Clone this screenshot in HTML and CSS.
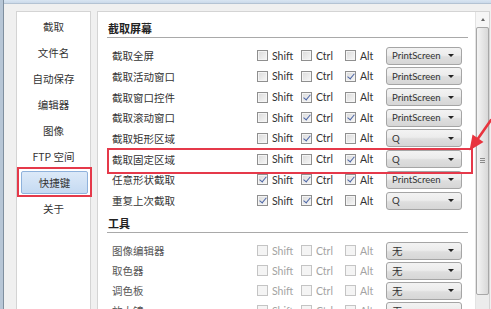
FILE: index.html
```html
<!DOCTYPE html>
<html lang="zh-CN">
<head>
<meta charset="utf-8">
<title>快捷键</title>
<link rel="stylesheet" href="styles.css">
</head>
<body>
<div class="window">
  <div class="topband"></div>
  <div class="main">
    <div class="frame-left"></div>
    <nav class="sidebar">
      <div class="nav-item">截取</div>
      <div class="nav-item">文件名</div>
      <div class="nav-item">自动保存</div>
      <div class="nav-item">编辑器</div>
      <div class="nav-item">图像</div>
      <div class="nav-item">FTP 空间</div>
      <div class="nav-item selected"><span class="sel">快捷键</span></div>
      <div class="nav-item">关于</div>
    </nav>
    <section class="content">
      <div class="pane">
        <div class="group">
          <div class="group-title">截取屏幕</div>
          <div class="rows main-rows">
            <div class="row">
              <span class="label">截取全屏</span>
              <span class="chk"><span class="box"></span>Shift</span>
              <span class="chk"><span class="box"></span>Ctrl</span>
              <span class="chk"><span class="box"></span>Alt</span>
              <span class="combo"><span class="val">PrintScreen</span><i class="caret"></i></span>
            </div>
            <div class="row">
              <span class="label">截取活动窗口</span>
              <span class="chk"><span class="box"></span>Shift</span>
              <span class="chk"><span class="box"></span>Ctrl</span>
              <span class="chk"><span class="box on"></span>Alt</span>
              <span class="combo"><span class="val">PrintScreen</span><i class="caret"></i></span>
            </div>
            <div class="row">
              <span class="label">截取窗口控件</span>
              <span class="chk"><span class="box"></span>Shift</span>
              <span class="chk"><span class="box on"></span>Ctrl</span>
              <span class="chk"><span class="box"></span>Alt</span>
              <span class="combo"><span class="val">PrintScreen</span><i class="caret"></i></span>
            </div>
            <div class="row">
              <span class="label">截取滚动窗口</span>
              <span class="chk"><span class="box"></span>Shift</span>
              <span class="chk"><span class="box on"></span>Ctrl</span>
              <span class="chk"><span class="box on"></span>Alt</span>
              <span class="combo"><span class="val">PrintScreen</span><i class="caret"></i></span>
            </div>
            <div class="row">
              <span class="label">截取矩形区域</span>
              <span class="chk"><span class="box"></span>Shift</span>
              <span class="chk"><span class="box on"></span>Ctrl</span>
              <span class="chk"><span class="box"></span>Alt</span>
              <span class="combo"><span class="val">Q</span><i class="caret"></i></span>
            </div>
            <div class="row marked">
              <span class="label">截取固定区域</span>
              <span class="chk"><span class="box"></span>Shift</span>
              <span class="chk"><span class="box"></span>Ctrl</span>
              <span class="chk"><span class="box on"></span>Alt</span>
              <span class="combo"><span class="val">Q</span><i class="caret"></i></span>
            </div>
            <div class="row">
              <span class="label">任意形状截取</span>
              <span class="chk"><span class="box on"></span>Shift</span>
              <span class="chk"><span class="box on"></span>Ctrl</span>
              <span class="chk"><span class="box on"></span>Alt</span>
              <span class="combo"><span class="val">PrintScreen</span><i class="caret"></i></span>
            </div>
            <div class="row">
              <span class="label">重复上次截取</span>
              <span class="chk"><span class="box on"></span>Shift</span>
              <span class="chk"><span class="box on"></span>Ctrl</span>
              <span class="chk"><span class="box"></span>Alt</span>
              <span class="combo"><span class="val">Q</span><i class="caret"></i></span>
            </div>
          </div>
        </div>
        <div class="group tools">
          <div class="group-title">工具</div>
          <div class="rows tool-rows">
            <div class="row disabled">
              <span class="label">图像编辑器</span>
              <span class="chk"><span class="box"></span>Shift</span>
              <span class="chk"><span class="box"></span>Ctrl</span>
              <span class="chk"><span class="box"></span>Alt</span>
              <span class="combo"><span class="val">无</span><i class="caret"></i></span>
            </div>
            <div class="row disabled">
              <span class="label">取色器</span>
              <span class="chk"><span class="box"></span>Shift</span>
              <span class="chk"><span class="box"></span>Ctrl</span>
              <span class="chk"><span class="box"></span>Alt</span>
              <span class="combo"><span class="val">无</span><i class="caret"></i></span>
            </div>
            <div class="row disabled">
              <span class="label">调色板</span>
              <span class="chk"><span class="box"></span>Shift</span>
              <span class="chk"><span class="box"></span>Ctrl</span>
              <span class="chk"><span class="box"></span>Alt</span>
              <span class="combo"><span class="val">无</span><i class="caret"></i></span>
            </div>
            <div class="row disabled">
              <span class="label">放大镜</span>
              <span class="chk"><span class="box"></span>Shift</span>
              <span class="chk"><span class="box"></span>Ctrl</span>
              <span class="chk"><span class="box"></span>Alt</span>
              <span class="combo"><span class="val">无</span><i class="caret"></i></span>
            </div>
          </div>
        </div>
      </div>
      <div class="scrollbar">
        <div class="sb-up"><i class="up-caret"></i></div>
        <div class="sb-thumb"><span class="grip"></span></div>
      </div>
    </section>
  </div>
  <svg class="arrow" width="32" height="36" viewBox="460 118 32 36">
    <line x1="491" y1="120" x2="477" y2="140" stroke="#e8343e" stroke-width="2.6" stroke-linecap="round"/>
    <polygon points="469.5,150.5 472.5,134.5 483.5,142" fill="#e8343e"/>
  </svg>
</div>
</body>
</html>
```
FILE: styles.css
```css
* { box-sizing: border-box; }
html, body {
  margin: 0;
  padding: 0;
  width: 491px;
  height: 309px;
  overflow: hidden;
  background: #f0f0f0;
}
body {
  font-family: "Noto Sans CJK SC", "Noto Sans", sans-serif;
  font-size: 10.5px;
  color: #333;
}
.window {
  position: relative;
  width: 491px;
  height: 309px;
  display: flex;
  flex-direction: column;
}
.topband {
  height: 4px;
  flex: none;
  background: linear-gradient(#d9e5f2, #cbdaea);
  border-bottom: 1px solid #b4c3d3;
}
.main {
  flex: 1;
  display: flex;
  padding-top: 7px;
  min-height: 0;
}
.frame-left {
  width: 4px;
  margin-top: -12px;
  flex: none;
  background: #b7c6d6;
  border-right: 1px solid #7f8f9f;
}
.sidebar {
  margin-left: 12px;
  width: 75px;
  flex: none;
  background: #fff;
  border: 1px solid #d4d4d4;
  border-bottom: none;
  padding-top: 1.5px;
}
.nav-item {
  height: 26px;
  display: flex;
  align-items: center;
  justify-content: center;
  color: #333;
  font-size: 10.5px;
}
.nav-item.selected {
  padding: 1.5px 2px 1.5px 4px;
}
.sel {
  position: relative;
  flex: 1;
  align-self: stretch;
  display: flex;
  align-items: center;
  justify-content: center;
  background: linear-gradient(#dce9f8, #c5daf2);
  border: 1px solid #8fb2dc;
  border-radius: 2px;
}
.sel::after {
  content: "";
  position: absolute;
  left: -5px;
  right: -5px;
  top: -5px;
  bottom: -4px;
  border: 2px solid #e5394a;
}
.content {
  margin-left: 6px;
  width: 393px;
  flex: none;
  background: #fff;
  border: 1px solid #d4d4d4;
  border-bottom: none;
  display: flex;
}
.pane {
  flex: 1;
  padding: 6px 7px 0 9px;
}
.group-title {
  height: 20px;
  line-height: 20px;
  font-weight: bold;
  font-size: 11px;
  color: #222;
  border-bottom: 1px solid #a9a9a9;
  padding-left: 1px;
}
.tools .group-title {
  height: 18px;
  line-height: 17px;
  margin-top: 4.5px;
}
.rows {
  padding-left: 5px;
}
.main-rows { margin-top: 7.4px; }
.tool-rows { margin-top: 7.6px; }
.row {
  display: grid;
  grid-template-columns: 145px 44px 44px 41px 76px;
  align-items: center;
  height: 20.7px;
}
.tool-rows .row { height: 20px; }
.row.marked { position: relative; }
.row.marked::after {
  content: "";
  position: absolute;
  left: -5px;
  top: -0.8px;
  width: 362px;
  height: 22px;
  border: 2px solid #e5394a;
}
.label {
  font-size: 10.5px;
  color: #333;
  white-space: nowrap;
}
.chk {
  display: flex;
  align-items: center;
  font-family: Lato, "Noto Sans", sans-serif;
  font-size: 10.5px;
  color: #333;
}
.box {
  width: 11px;
  height: 11px;
  margin-right: 4px;
  border: 1px solid #8f8f8f;
  background: linear-gradient(135deg, #dadada, #f7f7f7);
  box-shadow: inset 0 0 0 1px #f4f4f4;
  position: relative;
}
.box.on::after {
  content: "";
  position: absolute;
  left: 3px;
  top: 0px;
  width: 3px;
  height: 6px;
  border-right: 1.6px solid #4b64a5;
  border-bottom: 1.6px solid #4b64a5;
  transform: rotate(40deg);
}
.combo {
  height: 18px;
  display: flex;
  align-items: center;
  justify-content: space-between;
  padding: 0 7px 0 5px;
  border: 1px solid #a5a5a5;
  border-radius: 3px;
  background: linear-gradient(#f3f3f3 0%, #ececec 45%, #dedede 55%, #d6d6d6 100%);
  font-family: Lato, "Noto Sans", "Noto Sans CJK SC", sans-serif;
  font-size: 9.6px;
  color: #333;
}
.caret {
  width: 0;
  height: 0;
  border-left: 3px solid transparent;
  border-right: 3px solid transparent;
  border-top: 3px solid #222;
}
.disabled .label { color: #555; }
.disabled .chk { color: #a3a3a3; }
.disabled .box {
  border-color: #c4c4c4;
  background: #f4f4f4;
  box-shadow: none;
}
.disabled .val { font-family: "Noto Sans CJK SC", sans-serif; font-size: 10.5px; }
.scrollbar {
  width: 14px;
  flex: none;
  border-left: 1px solid #e3e3e3;
  background: #ececec;
  display: flex;
  flex-direction: column;
}
.sb-up {
  height: 15px;
  flex: none;
  display: flex;
  align-items: center;
  justify-content: center;
  background: #f6f6f6;
}
.up-caret {
  width: 0;
  height: 0;
  border-left: 2.5px solid transparent;
  border-right: 2.5px solid transparent;
  border-bottom: 3px solid #666;
}
.sb-thumb {
  height: 268px;
  flex: none;
  border: 1px solid #a7a7a7;
  border-radius: 2px;
  background: linear-gradient(90deg, #f4f4f4, #e6e6e6 50%, #d8d8d8);
  display: flex;
  align-items: center;
  justify-content: center;
}
.grip {
  width: 5px;
  height: 6px;
  background: repeating-linear-gradient(#8a8a8a 0 1px, transparent 1px 2px);
}
.arrow {
  position: absolute;
  left: 460px;
  top: 118px;
}
```
